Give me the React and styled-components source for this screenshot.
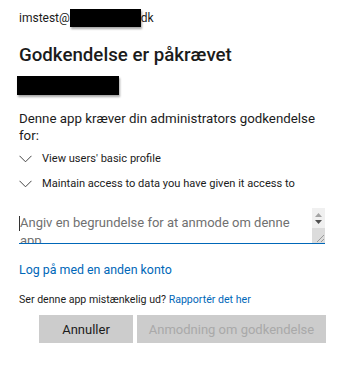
import React from "react";
import styled, { createGlobalStyle } from "styled-components";

const GlobalStyle = createGlobalStyle`
  html, body {
    margin: 0;
    padding: 0;
    background: #ffffff;
  }
  body {
    font-family: Roboto, "Noto Sans", sans-serif;
    color: #1b1b1b;
  }
`;

const Page = styled.div`
  width: 356px;
  height: 372px;
  padding: 8px 0 0 19px;
  box-sizing: border-box;
  overflow: hidden;
`;

const Identity = styled.div`
  display: flex;
  align-items: center;
  height: 20px;
  font-size: 12px;
  color: #1b1b1b;
`;

const Redacted = styled.span`
  display: inline-block;
  width: ${(p) => p.$w}px;
  height: ${(p) => p.$h}px;
  background: #000;
  box-shadow: 1px 2px 2px rgba(0, 0, 0, 0.35);
`;

const Title = styled.h1`
  margin: 14px 0 0;
  font-size: 18.7px;
  line-height: 26px;
  font-weight: 500;
  color: #1b1b1b;
`;

const NameBlock = styled.div`
  margin-top: 8px;
  margin-left: -2px;
`;

const Description = styled.p`
  margin: 11px 0 0;
  width: 310px;
  font-size: 13.3px;
  line-height: 17px;
`;

const Permissions = styled.ul`
  list-style: none;
  margin: 2px 0 0;
  padding: 0;
`;

const Permission = styled.li`
  display: flex;
  align-items: center;
  gap: 10px;
  height: 25px;
  font-size: 11.1px;
  color: #1b1b1b;
`;

const Chevron = () => (
  <svg width="13" height="8" viewBox="0 0 13 8">
    <path d="M0.5 0.8 L6.5 6.8 L12.5 0.8" fill="none" stroke="#444" strokeWidth="1" />
  </svg>
);

const Field = styled.div`
  position: relative;
  display: flex;
  width: 306px;
  height: 35px;
  margin-top: 12px;
  border-bottom: 1px solid #0067b8;
`;

const Caret = styled.span`
  position: absolute;
  left: 0;
  top: 8px;
  width: 1px;
  height: 15px;
  background: #333;
`;

const Reason = styled.textarea`
  flex: 1;
  height: 100%;
  margin: 0;
  border: none;
  outline: none;
  resize: none;
  overflow: hidden;
  padding: 6px 0 0 1px;
  box-sizing: border-box;
  font-family: inherit;
  font-size: 13px;
  line-height: 18px;
  color: #1b1b1b;
  background: transparent;
  &::placeholder {
    color: #707070;
  }
`;

const Scroll = styled.div`
  width: 13px;
  display: flex;
  flex-direction: column;
  background: #f0f0f0;
`;

const ScrollArrows = styled.div`
  height: 20px;
  display: flex;
  flex-direction: column;
  align-items: center;
  justify-content: center;
  gap: 3px;
`;

const Grip = styled.div`
  flex: 1;
  background: #dcdcdc;
  display: flex;
  align-items: flex-end;
  justify-content: flex-end;
`;

const Link = styled.a`
  display: block;
  margin-top: 17px;
  font-size: 12.4px;
  line-height: 18px;
  color: #0067b8;
  text-decoration: none;
`;

const Report = styled.p`
  margin: 14px 0 0;
  font-size: 10.6px;
  line-height: 14px;
  color: #1b1b1b;
  a {
    color: #0067b8;
    text-decoration: none;
  }
`;

const Actions = styled.div`
  display: flex;
  gap: 4px;
  margin-top: 8px;
  margin-left: 20px;
`;

const Button = styled.button`
  width: ${(p) => p.$w}px;
  height: 28px;
  border: none;
  padding: 0;
  background: #cccccc;
  font-family: inherit;
  font-size: 13px;
  color: ${(p) => (p.disabled ? "#a9a9a9" : "#1b1b1b")};
`;

export default function App() {
  return (
    <>
      <GlobalStyle />
      <Page>
        <Identity>
          imstest@
          <Redacted $w={71} $h={18} />
          dk
        </Identity>
        <Title>Godkendelse er påkrævet</Title>
        <NameBlock>
          <Redacted $w={102} $h={19} />
        </NameBlock>
        <Description>
          Denne app kræver din administrators godkendelse for:
        </Description>
        <Permissions>
          <Permission>
            <Chevron />
            View users' basic profile
          </Permission>
          <Permission>
            <Chevron />
            Maintain access to data you have given it access to
          </Permission>
        </Permissions>
        <Field>
          <Caret />
          <Reason placeholder="Angiv en begrundelse for at anmode om denne app" />
          <Scroll>
            <ScrollArrows>
              <svg width="7" height="4" viewBox="0 0 7 4">
                <path d="M0 4 L3.5 0 L7 4 Z" fill="#a3a3a3" />
              </svg>
              <svg width="7" height="4" viewBox="0 0 7 4">
                <path d="M0 0 L3.5 4 L7 0 Z" fill="#505050" />
              </svg>
            </ScrollArrows>
            <Grip>
              <svg width="10" height="10" viewBox="0 0 10 10">
                <path d="M9 2 L2 9 M9 6 L6 9" stroke="#9a9a9a" strokeWidth="1" />
              </svg>
            </Grip>
          </Scroll>
        </Field>
        <Link href="#">Log på med en anden konto</Link>
        <Report>
          Ser denne app mistænkelig ud? <a href="#">Rapportér det her</a>
        </Report>
        <Actions>
          <Button $w={94}>Annuller</Button>
          <Button $w={189} disabled>
            Anmodning om godkendelse
          </Button>
        </Actions>
      </Page>
    </>
  );
}
